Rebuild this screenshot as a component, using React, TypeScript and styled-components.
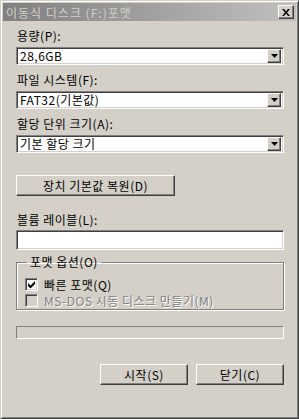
import React from 'react';
import styled, { createGlobalStyle, css } from 'styled-components';

const GlobalStyle = createGlobalStyle`
  html, body {
    margin: 0;
    padding: 0;
    background: #d4d0c8;
  }
  body {
    font-family: "Noto Sans CJK KR", "Liberation Sans", sans-serif;
    font-size: 12px;
    letter-spacing: 0.5px;
    color: #000;
  }
`;

const raised = css`
  border: 1px solid;
  border-color: #fff #404040 #404040 #fff;
  box-shadow: inset -1px -1px #808080, inset 1px 1px #d4d0c8;
`;

const sunken = css`
  border: 1px solid;
  border-color: #808080 #fff #fff #808080;
  box-shadow: inset 1px 1px #404040, inset -1px -1px #d4d0c8;
`;

const Window = styled.div`
  box-sizing: border-box;
  width: 299px;
  height: 419px;
  padding: 2px;
  background: #d4d0c8;
  border: 1px solid;
  border-color: #d4d0c8 #404040 #404040 #d4d0c8;
  box-shadow: inset 1px 1px #fff, inset -1px -1px #808080;
  display: flex;
  flex-direction: column;
`;

const TitleBar = styled.div`
  height: 18px;
  display: flex;
  align-items: center;
  justify-content: space-between;
  padding: 0 2px 0 3px;
  background: linear-gradient(to right, #808080, #c0c0c0);
  color: #d4d0c8;
  font-size: 12px;
  letter-spacing: 1px;
`;

const CloseButton = styled.div`
  box-sizing: border-box;
  width: 16px;
  height: 14px;
  background: #d4d0c8;
  ${raised};
  display: flex;
  align-items: center;
  justify-content: center;
`;

const Body = styled.div`
  display: flex;
  flex-direction: column;
  padding: 8px 10px 0 13px;
`;

const Label = styled.div<{ $top?: number }>`
  height: 14px;
  line-height: 14px;
  margin-top: ${p => p.$top ?? 0}px;
  margin-left: 1px;
  white-space: nowrap;
`;

const Combo = styled.div`
  box-sizing: border-box;
  margin-top: 4px;
  height: 18px;
  width: 268px;
  background: #fff;
  ${sunken};
  display: flex;
  align-items: center;
  padding: 2px;
`;

const ComboText = styled.div`
  flex: 1;
  padding-left: 1px;
  line-height: 14px;
  white-space: nowrap;
`;

const DropButton = styled.div`
  box-sizing: border-box;
  width: 14px;
  height: 14px;
  background: #d4d0c8;
  ${raised};
  display: flex;
  align-items: center;
  justify-content: center;
`;

const PushButton = styled.div<{ $w: number; $top?: number }>`
  box-sizing: border-box;
  width: ${p => p.$w}px;
  height: 21px;
  margin-top: ${p => p.$top ?? 0}px;
  background: #d4d0c8;
  ${raised};
  display: flex;
  align-items: center;
  justify-content: center;
  white-space: nowrap;
`;

const TextInput = styled.div`
  box-sizing: border-box;
  margin-top: 3px;
  height: 20px;
  width: 268px;
  background: #fff;
  ${sunken};
`;

const Group = styled.fieldset`
  box-sizing: border-box;
  margin: 5px 0 0;
  width: 268px;
  height: 55px;
  padding: 9px 8px 0;
  border: 1px solid #808080;
  box-shadow: 1px 1px #fff, inset 1px 1px #fff;
  display: flex;
  flex-direction: column;
  gap: 3px;
`;

const Legend = styled.legend`
  padding: 0 3px;
  margin-left: 2px;
  line-height: 14px;
`;

const CheckRow = styled.div<{ $disabled?: boolean }>`
  display: flex;
  align-items: center;
  gap: 6px;
  height: 13px;
  color: ${p => (p.$disabled ? '#808080' : '#000')};
  text-shadow: ${p => (p.$disabled ? '1px 1px #fff' : 'none')};
  white-space: nowrap;
`;

const CheckBox = styled.div<{ $disabled?: boolean }>`
  box-sizing: border-box;
  width: 13px;
  height: 13px;
  background: ${p => (p.$disabled ? '#d4d0c8' : '#fff')};
  ${sunken};
  display: flex;
  align-items: center;
  justify-content: center;
`;

const Progress = styled.div`
  box-sizing: border-box;
  margin-top: 16px;
  width: 268px;
  height: 13px;
  border: 1px solid;
  border-color: #808080 #fff #fff #808080;
`;

const ButtonRow = styled.div`
  display: flex;
  justify-content: flex-end;
  gap: 8px;
  margin-top: 25px;
  width: 268px;
`;

const Arrow = () => (
  <svg width="7" height="4" viewBox="0 0 7 4">
    <path d="M0 0h7L3.5 4z" fill="#000" />
  </svg>
);

const CloseX = () => (
  <svg width="8" height="7" viewBox="0 0 8 7">
    <path d="M0 0h2l2 2.5L6 0h2L5 3.5 8 7H6L4 4.5 2 7H0l3-3.5z" fill="#000" />
  </svg>
);

const Check = () => (
  <svg width="7" height="7" viewBox="0 0 7 7">
    <path d="M0 2v3l2 2h1l4-4V0L2.5 4.5z" fill="#000" />
  </svg>
);

const ComboBox = ({ value }: { value: string }) => (
  <Combo>
    <ComboText>{value}</ComboText>
    <DropButton><Arrow /></DropButton>
  </Combo>
);

export default function App() {
  return (
    <>
      <GlobalStyle />
      <Window>
        <TitleBar>
          <span>이동식 디스크 (F:)포맷</span>
          <CloseButton><CloseX /></CloseButton>
        </TitleBar>
        <Body>
          <Label>용량(P):</Label>
          <ComboBox value="28,6GB" />
          <Label $top={8}>파일 시스템(F):</Label>
          <ComboBox value="FAT32(기본값)" />
          <Label $top={8}>할당 단위 크기(A):</Label>
          <ComboBox value="기본 할당 크기" />
          <PushButton $w={159} $top={22}>장치 기본값 복원(D)</PushButton>
          <Label $top={17}>볼륨 레이블(L):</Label>
          <TextInput />
          <Group>
            <Legend>포맷 옵션(O)</Legend>
            <CheckRow>
              <CheckBox><Check /></CheckBox>
              <span>빠른 포맷(Q)</span>
            </CheckRow>
            <CheckRow $disabled>
              <CheckBox $disabled />
              <span>MS-DOS 시동 디스크 만들기(M)</span>
            </CheckRow>
          </Group>
          <Progress />
          <ButtonRow>
            <PushButton $w={88}>시작(S)</PushButton>
            <PushButton $w={88}>닫기(C)</PushButton>
          </ButtonRow>
        </Body>
      </Window>
    </>
  );
}
